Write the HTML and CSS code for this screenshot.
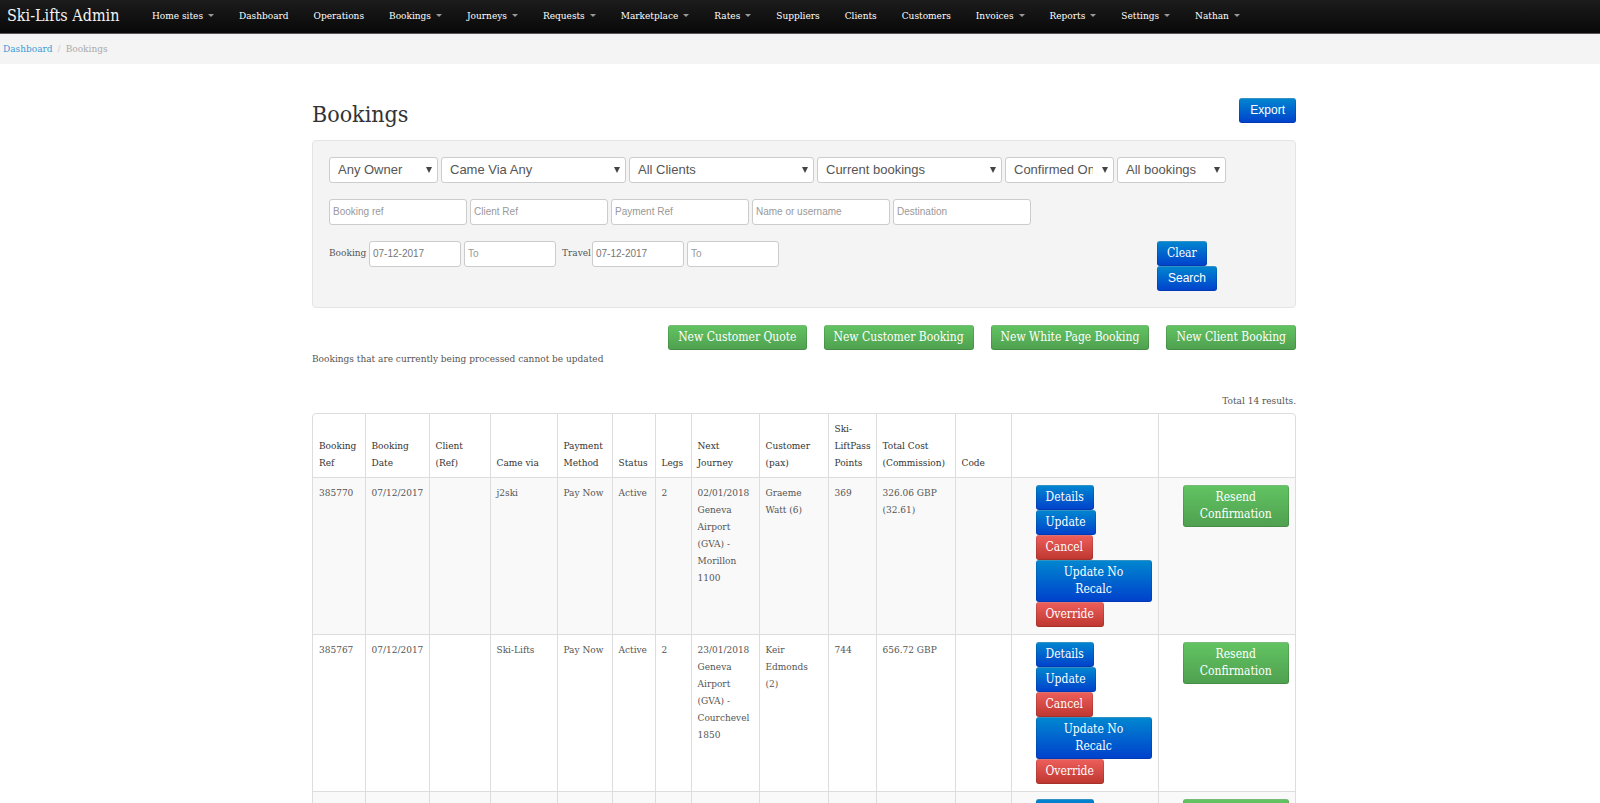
FILE: index.html
```html
<!DOCTYPE html>
<html lang="en">
<head>
<meta charset="utf-8">
<title>Bookings - Ski-Lifts Admin</title>
<link rel="stylesheet" href="styles.css">
</head>
<body>
<header class="navbar">
  <a class="brand" href="#">Ski-Lifts Admin</a>
  <nav>
    <ul class="nav">
      <li><a class="drop" href="#">Home sites</a></li>
      <li><a href="#">Dashboard</a></li>
      <li><a href="#">Operations</a></li>
      <li><a class="drop" href="#">Bookings</a></li>
      <li><a class="drop" href="#">Journeys</a></li>
      <li><a class="drop" href="#">Requests</a></li>
      <li><a class="drop" href="#">Marketplace</a></li>
      <li><a class="drop" href="#">Rates</a></li>
      <li><a href="#">Suppliers</a></li>
      <li><a href="#">Clients</a></li>
      <li><a href="#">Customers</a></li>
      <li><a class="drop" href="#">Invoices</a></li>
      <li><a class="drop" href="#">Reports</a></li>
      <li><a class="drop" href="#">Settings</a></li>
      <li><a class="drop" href="#">Nathan</a></li>
    </ul>
  </nav>
</header>
<div class="breadcrumb">
  <a href="#">Dashboard</a><span class="divider">/</span><span class="current">Bookings</span>
</div>
<main class="container">
  <div class="title-row">
    <h1>Bookings</h1>
    <button class="btn primary sans" type="button">Export</button>
  </div>
  <form class="well">
    <div class="fields">
      <select class="small" aria-label="Owner"><option>Any Owner</option></select>
      <select aria-label="Came via"><option>Came Via Any</option></select>
      <select aria-label="Client"><option>All Clients</option></select>
      <select aria-label="Period"><option>Current bookings</option></select>
      <select class="small" aria-label="Confirmation"><option>Confirmed Only</option></select>
      <select class="small" aria-label="Booking type"><option>All bookings</option></select>
    </div>
    <div class="fields">
      <input type="text" placeholder="Booking ref" aria-label="Booking ref">
      <input type="text" placeholder="Client Ref" aria-label="Client Ref">
      <input type="text" placeholder="Payment Ref" aria-label="Payment Ref">
      <input type="text" placeholder="Name or username" aria-label="Name or username">
      <input type="text" placeholder="Destination" aria-label="Destination">
    </div>
    <div class="dates-row">
      <div class="fields dates">
        <label for="booking-from">Booking</label>
        <input id="booking-from" type="text" value="07-12-2017">
        <input type="text" placeholder="To" aria-label="Booking to">
        <label class="next" for="travel-from">Travel</label>
        <input id="travel-from" type="text" value="07-12-2017">
        <input type="text" placeholder="To" aria-label="Travel to">
      </div>
      <div class="submit">
        <button class="btn primary" type="reset">Clear</button>
        <button class="btn primary sans" type="submit">Search</button>
      </div>
    </div>
  </form>
  <div class="actions">
    <button class="btn success" type="button">New Customer Quote</button>
    <button class="btn success" type="button">New Customer Booking</button>
    <button class="btn success" type="button">New White Page Booking</button>
    <button class="btn success" type="button">New Client Booking</button>
  </div>
  <p class="note">Bookings that are currently being processed cannot be updated</p>
  <p class="summary">Total 14 results.</p>
  <div class="grid">
  <table>
    <colgroup>
      <col class="c-ref"><col class="c-date"><col class="c-client"><col class="c-via"><col class="c-pay"><col class="c-status"><col class="c-legs"><col class="c-next"><col class="c-customer"><col class="c-points"><col class="c-cost"><col class="c-code"><col class="c-actions"><col class="c-resend">
    </colgroup>
    <thead>
      <tr><th>Booking Ref</th><th>Booking Date</th><th>Client<br>(Ref)</th><th>Came via</th><th>Payment Method</th><th>Status</th><th>Legs</th><th>Next Journey</th><th>Customer (pax)</th><th>Ski-<br>LiftPass Points</th><th>Total Cost (Commission)</th><th>Code</th><th></th><th></th></tr>
    </thead>
    <tbody>
      <tr>
        <td>385770</td><td>07/12/2017</td><td></td><td>j2ski</td><td>Pay Now</td><td>Active</td><td>2</td>
        <td>02/01/2018 Geneva Airport (GVA)&nbsp;- Morillon 1100</td><td>Graeme Watt&nbsp;(6)</td><td>369</td><td>326.06 GBP (32.61)</td><td></td>
        <td class="ops"><div class="stack"><button class="btn primary">Details</button><button class="btn primary">Update</button><button class="btn danger">Cancel</button><button class="btn primary wide">Update No<br>Recalc</button><button class="btn danger">Override</button></div></td>
        <td class="ops"><div class="stack"><button class="btn success wide">Resend Confirmation</button></div></td>
      </tr>
      <tr>
        <td>385767</td><td>07/12/2017</td><td></td><td>Ski-Lifts</td><td>Pay Now</td><td>Active</td><td>2</td>
        <td>23/01/2018 Geneva Airport (GVA)&nbsp;- Courchevel 1850</td><td>Keir Edmonds (2)</td><td>744</td><td>656.72 GBP</td><td></td>
        <td class="ops"><div class="stack"><button class="btn primary">Details</button><button class="btn primary">Update</button><button class="btn danger">Cancel</button><button class="btn primary wide">Update No<br>Recalc</button><button class="btn danger">Override</button></div></td>
        <td class="ops"><div class="stack"><button class="btn success wide">Resend Confirmation</button></div></td>
      </tr>
      <tr>
        <td></td><td></td><td></td><td></td><td></td><td></td><td></td><td></td><td></td><td></td><td></td><td></td>
        <td class="ops"><div class="stack"><button class="btn primary">Details</button></div></td>
        <td class="ops"><div class="stack"><button class="btn success wide">Resend Confirmation</button></div></td>
      </tr>
    </tbody>
  </table>
  </div>
</main>
</body>
</html>
```
FILE: styles.css
```css
* { box-sizing: border-box; }
html { height: 100%; overflow: hidden; }
body {
  margin: 0;
  height: 100%;
  overflow: hidden;
  background: #fff;
  color: #555;
  font-family: "DejaVu Serif Condensed", "DejaVu Serif", serif;
  font-size: 10px;
  line-height: 17px;
}
a { color: #3a9bd6; text-decoration: none; }
.navbar {
  display: flex;
  align-items: center;
  height: 34px;
  padding: 0 7px 2px;
  background: linear-gradient(#1c1c1c, #080808);
  border-bottom: 1px solid #5c5558;
}
.brand { width: 133px; color: #f2f2f2; font-size: 16px; white-space: nowrap; }
.nav { display: flex; gap: 1px; margin: 0; padding: 0; list-style: none; }
.nav a { display: flex; align-items: center; padding: 0 12px; color: #fff; white-space: nowrap; }
.drop::after {
  content: "";
  margin-left: 5px;
  border: 3px solid transparent;
  border-top-color: #999;
  border-bottom: 0;
}
.breadcrumb { height: 30px; padding: 6px 3px; background: #f4f4f4; }
.divider { margin: 0 5px; color: #ccc; }
.current { color: #aaa; }
.container { max-width: 992px; margin: 0 auto; padding: 34px 0 0 8px; }
.title-row { display: flex; justify-content: space-between; align-items: flex-start; margin-bottom: 10px; }
h1 { margin: 0; color: #333; font-size: 23px; font-weight: 400; line-height: 32px; }
.btn {
  padding: 4px 10px;
  border: 0;
  border-radius: 3px;
  color: #fff;
  font: 12px/17px "DejaVu Serif Condensed", "DejaVu Serif", serif;
  box-shadow: inset 0 1px 0 rgba(255, 255, 255, .2), inset 0 0 0 1px rgba(0, 0, 0, .12);
}
.primary { background: linear-gradient(#0088d0, #0040cc); }
.success { background: linear-gradient(#62c462, #4fa04f); }
.danger { background: linear-gradient(#ee5f5b, #bd362f); }
.sans { padding: 4px 11px; font-family: "Liberation Sans", Arial, sans-serif; }
.well {
  display: flex;
  flex-direction: column;
  gap: 16px;
  padding: 16px;
  border: 1px solid #e5e5e5;
  border-radius: 4px;
  background: #f4f4f4;
}
.fields { display: flex; gap: 3px; }
.fields select, .fields input {
  height: 26px;
  border: 1px solid #ccc;
  border-radius: 3px;
  color: #777;
  font: 10px "Liberation Sans", Arial, sans-serif;
  background: #fff;
}
.fields input { width: 138px; padding: 0 3px 1px; }
.fields input::placeholder { color: #999; }
.fields select {
  appearance: none;
  width: 185px;
  padding: 0 20px 2px 8px;
  color: #555;
  font-size: 13px;
  background: #fff url("data:image/svg+xml,%3Csvg xmlns='http://www.w3.org/2000/svg' width='6' height='6'%3E%3Cpath d='M0 0h6L3 6z' fill='%23444'/%3E%3C/svg%3E") no-repeat right 5px center;
}
.fields .small { width: 109px; }
.dates-row { display: flex; justify-content: space-between; }
.dates .next, .dates label { padding-top: 3px; }
.dates input { width: 92px; }
.dates label { width: 37px; }
.dates .next { width: 27px; margin-left: 3px; }
.submit { display: flex; flex-direction: column; align-items: flex-start; width: 122px; }
.actions { display: flex; justify-content: flex-end; gap: 17px; margin-top: 17px; }
.note { margin: 0; }
.summary { margin: 25px 0 4px; text-align: right; }
.grid { border: 1px solid #ddd; border-radius: 4px; }
table { width: 100%; table-layout: fixed; border-collapse: collapse; }
th, td { padding: 7px 6px; border-left: 1px solid #ddd; text-align: left; vertical-align: top; }
th:first-child, td:first-child { border-left: 0; }
th { padding: 6px; color: #333; font-weight: 400; vertical-align: bottom; }
td { border-top: 1px solid #ddd; }
td:not(.ops) { padding-top: 6px; }
tbody tr:nth-child(odd) { background: #f9f9f9; }
.ops { padding-left: 24px; }
.stack { display: flex; flex-direction: column; align-items: flex-start; }
.wide { align-self: stretch; }
.c-ref { width: 52px; }
.c-date { width: 64px; }
.c-client { width: 61px; }
.c-via { width: 67px; }
.c-pay { width: 55px; }
.c-status { width: 43px; }
.c-legs { width: 36px; }
.c-next { width: 68px; }
.c-customer { width: 69px; }
.c-points { width: 48px; }
.c-cost { width: 79px; }
.c-code { width: 56px; }
.c-actions { width: 147px; }
```
